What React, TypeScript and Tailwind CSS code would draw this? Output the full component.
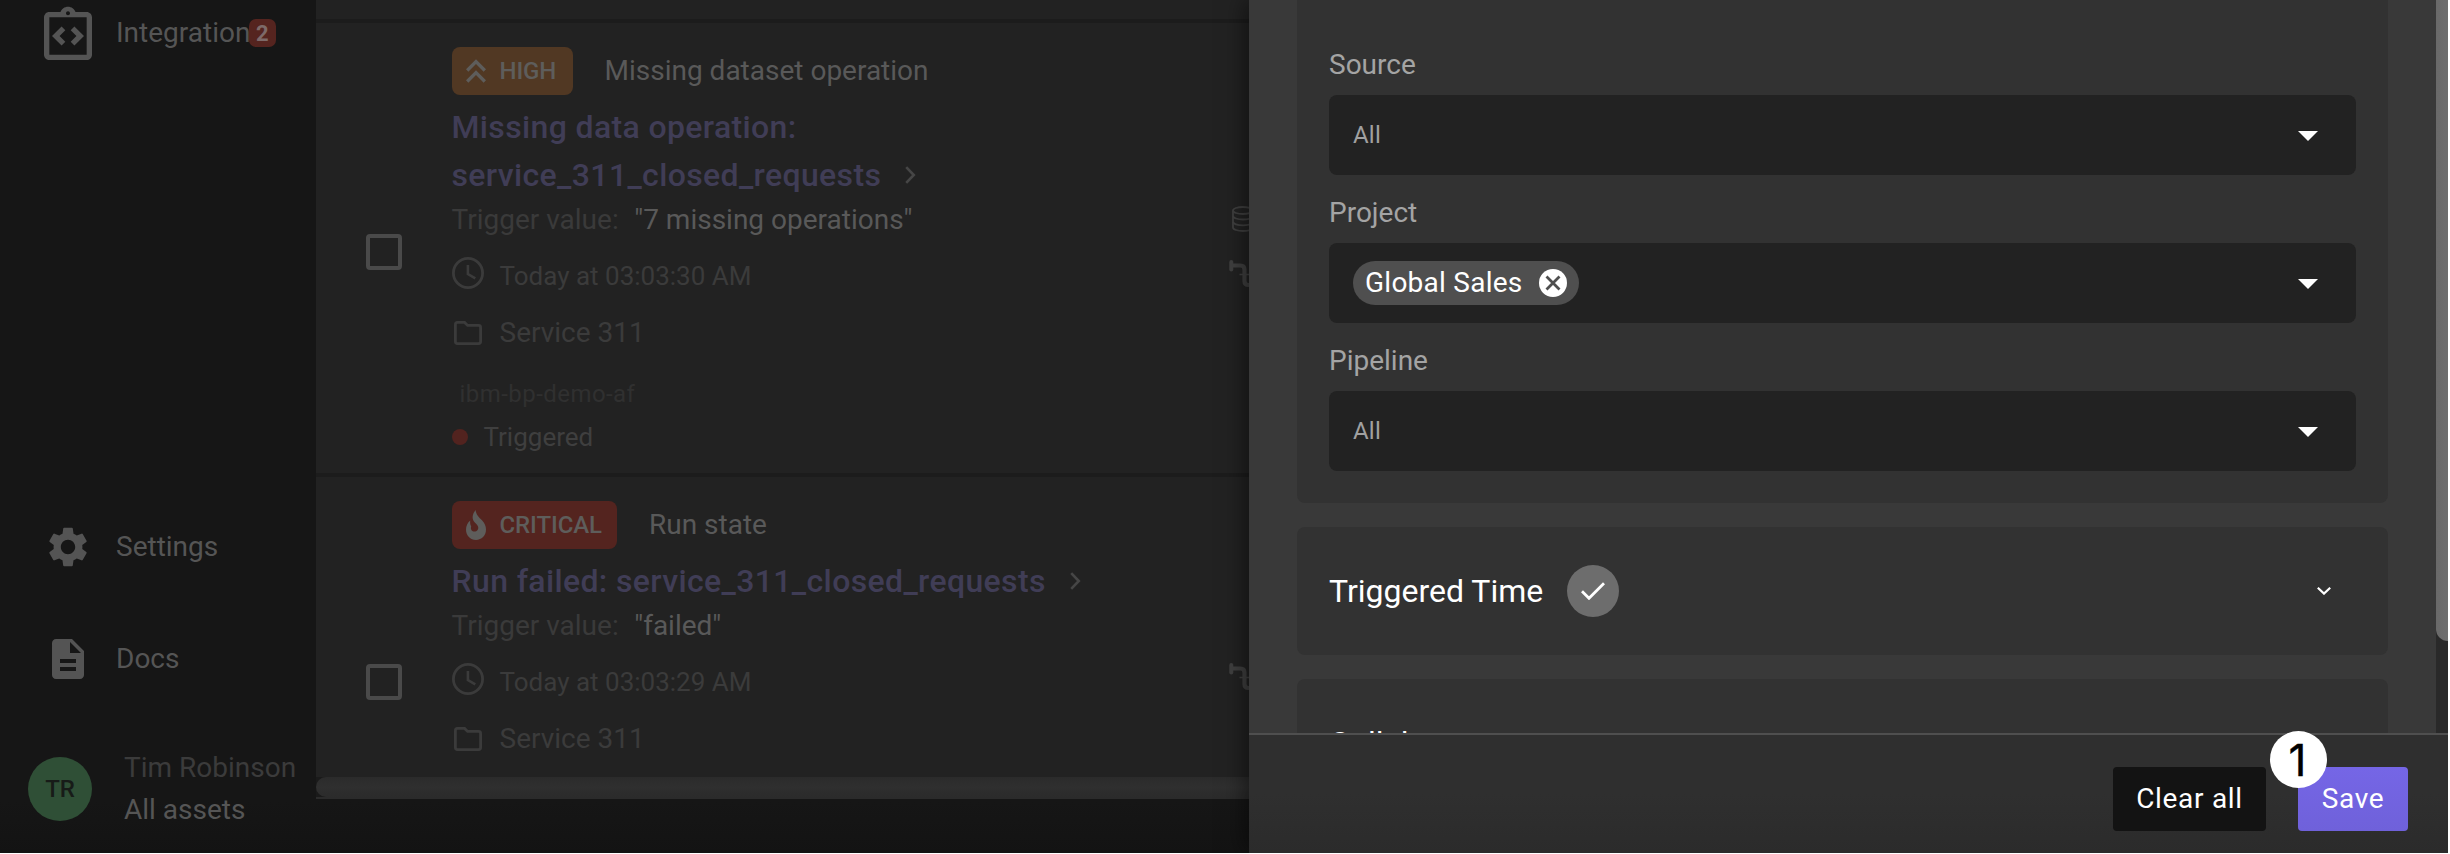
import React from "react";
import {
  MdOutlineIntegrationInstructions,
  MdSettings,
  MdDescription,
  MdKeyboardDoubleArrowUp,
} from "react-icons/md";

function ClockIcon() {
  return (
    <svg className="mb-[6px] size-8 shrink-0" viewBox="0 0 32 32" fill="none" stroke="currentColor" strokeWidth="2.8">
      <circle cx="16" cy="16" r="14.6" />
      <path d="M15.9 8v9l7.4 4.4" strokeWidth="2.6" />
    </svg>
  );
}

function FolderIcon() {
  return (
    <svg className="mx-0.5 h-6 w-7 shrink-0" viewBox="0 0 28 24" fill="none" stroke="currentColor" strokeWidth="2.8">
      <path d="M3.4 1.4h7.2l3 3h11q2 0 2 2v14.2q0 2-2 2H3.4q-2 0-2-2V3.4q0-2 2-2z" />
    </svg>
  );
}

function FlameIcon() {
  return (
    <svg className="h-[30px] w-5 shrink-0" viewBox="0 0 20 30" fill="currentColor">
      <path d="M9.6 0C9.9 4.4 13 7.200 16.200 10.600C18.600 13.200 20 16 20 19.600C20 25.600 15.600 30 10 30C4.400 30 0 25.700 0 19.600C0 15.800 1.600 12.600 4.200 10.400C4 13.200 4.300 15 5.200 16.200C4.200 19.400 6 21.600 8.400 21.600C11 21.600 12.600 19.600 12.200 17C11.800 14.600 9.200 13.200 7.800 11.200C5.700 8 6.600 3.600 9.600 0Z" />
    </svg>
  );
}

function DatabaseIcon() {
  return (
    <svg className="ml-[3px] h-[26px] w-6 shrink-0" viewBox="0 0 24 26" fill="none" stroke="currentColor" strokeWidth="1.8">
      <ellipse cx="11" cy="4.500" rx="10" ry="3.500" />
      <path d="M1 4.500V21.500c0 2 4.500 3.500 10 3.500S21 23.500 21 21.500V4.500" />
      <path d="M1 10c0 2 4.500 3.500 10 3.500S21 12 21 10M1 15.800c0 2 4.500 3.500 10 3.500S21 17.800 21 15.800" />
    </svg>
  );
}

function PipeIcon() {
  return (
    <svg className="h-7 w-8 shrink-0" viewBox="0 0 32 28" fill="none" stroke="currentColor">
      <path d="M2.300 2v7.500" strokeWidth="4" strokeLinecap="round" />
      <path d="M3 5.500h8.500q4 0 4 4V21q0 4 4 4H30" strokeWidth="4.200" />
      <path d="M10.500 14.500h10" strokeWidth="1.600" />
    </svg>
  );
}

function ChevronRight() {
  return (
    <svg className="h-[18px] w-[11px] shrink-0" viewBox="0 0 11 18" fill="none" stroke="currentColor" strokeWidth="2.6">
      <path d="M1.200 1.200L8.800 9L1.200 16.800" />
    </svg>
  );
}

function NavItem({ icon, label, badge }: { icon: React.ReactNode; label: string; badge?: string }) {
  return (
    <div className="flex h-16 items-center text-[28px] text-[#555]">
      <div className="flex w-[136px] shrink-0 justify-center text-[#545454]">{icon}</div>
      <span className="-ml-5">{label}</span>
      {badge && (
        <span className="-ml-[1.5px] flex h-7 w-[27px] items-center justify-center rounded-[7px] bg-[#55241f] text-[22px] font-bold text-[#7d6a69]">
          {badge}
        </span>
      )}
    </div>
  );
}

type Alert = {
  severity: "HIGH" | "CRITICAL";
  kind: string;
  title: string[];
  value: string;
  time: string;
  project: string;
  tag?: string;
  status?: string;
};

function AlertRow({ alert, checkTop, iconsTop }: { alert: Alert; checkTop: string; iconsTop: string }) {
  const high = alert.severity === "HIGH";
  return (
    <div className="flex shrink-0 border-t-4 border-[#1c1c1c]">
      <div className={`ml-[50px] w-[85.5px] shrink-0 ${checkTop}`}>
        <div className="size-9 rounded-[4px] border-4 border-[#4a4a4a]" />
      </div>
      <div className="flex w-[777.5px] shrink-0 flex-col pt-6">
        <div className="flex h-12 items-center text-[28px] text-[#595959]">
          <div
            className={`flex h-12 items-center rounded-lg text-[#5e5d5b] ${
              high ? "w-[121px] bg-[#513823]" : "w-[165.5px] bg-[#54241f]"
            }`}
          >
            <div className="flex w-12 justify-center">
              {high ? <MdKeyboardDoubleArrowUp className="size-10" /> : <FlameIcon />}
            </div>
            <span className="text-[24px] font-medium tracking-[-0.1px]">{alert.severity}</span>
          </div>
          <span className="ml-8">{alert.kind}</span>
        </div>
        <div className="mt-2 text-[32px] leading-[48px] font-medium tracking-[0.36px] text-[#403d56]">
          {alert.title.map((line, i) => (
            <div key={line} className="flex items-center whitespace-nowrap">
              {line}
              {i === alert.title.length - 1 && (
                <span className="ml-6 text-[#464646]">
                  <ChevronRight />
                </span>
              )}
            </div>
          ))}
        </div>
        <div className="flex h-[41px] items-center text-[28px] text-[#3a3a3a]">
          Trigger value:<span className="ml-[15.5px] text-[#595959]">{alert.value}</span>
        </div>
        <div className="flex h-[72px] items-center gap-4 text-[26px] text-[#3b3b3b]">
          <ClockIcon />
          {alert.time}
        </div>
        <div className="flex h-[42px] items-center gap-4 text-[28px] text-[#3b3b3b]">
          <FolderIcon />
          {alert.project}
        </div>
        {alert.tag && (
          <div className="mt-[22px] flex h-9 items-center pl-2 text-[24px] tracking-[0.45px] text-[#303030]">{alert.tag}</div>
        )}
        {alert.status && (
          <div className="mb-[11px] flex h-[50px] items-center text-[26px] text-[#3f3f3f]">
            <span className="mr-4 size-4 rounded-full bg-[#52231f]" />
            {alert.status}
          </div>
        )}
      </div>
      <div className={`flex flex-col gap-7 text-[#404040] ${iconsTop}`}>
        {high && <DatabaseIcon />}
        <PipeIcon />
      </div>
    </div>
  );
}

const alerts: Alert[] = [
  {
    severity: "HIGH",
    kind: "Missing dataset operation",
    title: ["Missing data operation:", "service_311_closed_requests"],
    value: '"7 missing operations"',
    time: "Today at 03:03:30 AM",
    project: "Service 311",
    tag: "ibm-bp-demo-af",
    status: "Triggered",
  },
  {
    severity: "CRITICAL",
    kind: "Run state",
    title: ["Run failed: service_311_closed_requests"],
    value: '"failed"',
    time: "Today at 03:03:29 AM",
    project: "Service 311",
  },
];

function FilterSelect({ label, children }: { label: string; children: React.ReactNode }) {
  return (
    <div className="flex flex-col">
      <div className="flex h-[68px] items-center pt-2 text-[28px] text-[#a4a4a4]">{label}</div>
      <div className="flex h-20 items-center justify-between rounded-lg bg-[#222] pr-[38px] pl-6">
        {children}
        <svg className="mt-[2px] h-[10px] w-5" viewBox="0 0 20 10" fill="#fff">
          <path d="M0 0h20L10 10z" />
        </svg>
      </div>
    </div>
  );
}

function Placeholder() {
  return <span className="text-[24px] tracking-[0.2px] text-[#a0a0a0]">All</span>;
}

export default function App() {
  return (
    <div className="h-[854px] w-[2450px] overflow-hidden bg-white font-['Roboto',sans-serif]">
      <div className="flex h-[853px] w-[2448px] overflow-hidden bg-[#161616]">
        <aside className="flex w-[316px] shrink-0 flex-col bg-linear-to-b from-[#161616] from-94% to-[#131313]">
          <div className="mt-[1px]">
            <NavItem icon={<MdOutlineIntegrationInstructions className="size-16 translate-y-[3px]" />} label="Integration" badge="2" />
          </div>
          <div className="mt-[450px] flex flex-col gap-12">
            <NavItem icon={<MdSettings className="size-12" />} label="Settings" />
            <NavItem icon={<MdDescription className="size-12" />} label="Docs" />
          </div>
          <div className="mt-14 flex items-center pl-7">
            <div className="flex size-16 items-center justify-center rounded-full bg-[#2f4f36] text-[24px] font-medium text-[#171b18]">
              TR
            </div>
            <div className="ml-8 text-[28px] leading-[42px] whitespace-nowrap">
              <div className="text-[#3b3b3b]">Tim Robinson</div>
              <div className="text-[#555]">All assets</div>
            </div>
          </div>
        </aside>

        <main className="flex w-[933px] shrink-0 flex-col overflow-hidden bg-linear-to-b from-[#161616] from-94% to-[#131313]">
          <div className="flex h-[777px] shrink-0 flex-col overflow-hidden bg-[#222] pt-[19px]">
            <AlertRow alert={alerts[0]} checkTop="pt-[211px]" iconsTop="pt-[183px]" />
            <AlertRow alert={alerts[1]} checkTop="pt-[187px]" iconsTop="pt-[186px]" />
          </div>
          <div className="h-[22px] shrink-0 border-b-2 border-[#2b2b2b] bg-[#1a1a1a]">
            <div className="h-5 w-[1200px] rounded-full bg-linear-to-b from-[#2b2b2b] via-[#2f2f2f] to-[#2b2b2b]" />
          </div>
        </main>

        <section className="relative flex w-[1199px] shrink-0 flex-col bg-[#393939] shadow-[-4px_0_22px_rgba(0,0,0,0.5)]">
          <div className="flex h-[733px] shrink-0 overflow-hidden">
            <div className="flex w-[1187px] flex-col gap-6 pr-12 pl-12">
              <div className="h-[503px] shrink-0 rounded-b-lg bg-[#323232] px-8 pt-[27px]">
                <FilterSelect label="Source">
                  <Placeholder />
                </FilterSelect>
                <FilterSelect label="Project">
                  <div className="flex h-11 items-center rounded-full bg-[#4f4f4f] px-3 text-[28px] tracking-[0.25px] text-white">
                    Global Sales
                    <svg className="ml-[16.500px] size-7" viewBox="0 0 28 28">
                      <circle cx="14" cy="14" r="14" fill="#fff" />
                      <path d="M7.500 7.500l13 13M20.500 7.500l-13 13" stroke="#4f4f4f" strokeWidth="2.800" />
                    </svg>
                  </div>
                </FilterSelect>
                <FilterSelect label="Pipeline">
                  <Placeholder />
                </FilterSelect>
              </div>
              <div className="flex h-32 shrink-0 items-center rounded-lg bg-[#323232] pr-[57px] pl-8 text-[32px] text-white">
                Triggered Time
                <div className="ml-6 flex size-[52px] items-center justify-center rounded-full bg-[#6d6d6d]">
                  <svg className="h-[18px] w-6" viewBox="0 0 24 18" fill="none" stroke="#fff" strokeWidth="2.800">
                    <path d="M1 9.300l7 7L23 1.200" />
                  </svg>
                </div>
                <svg className="ml-auto h-2 w-[14px]" viewBox="0 0 14 8" fill="none" stroke="#fff" strokeWidth="2.200">
                  <path d="M.8.800L7 6.600L13.200.800" />
                </svg>
              </div>
              <div className="flex h-32 shrink-0 items-center rounded-lg bg-[#323232] pl-8 text-[32px] text-white">
                Collaborators
              </div>
            </div>
            <div className="w-3 overflow-hidden bg-[#292929]">
              <div className="h-[641px] w-6 rounded-b-full bg-linear-to-r from-[#696969] to-[#737373]" />
            </div>
          </div>
          <footer className="flex h-[120px] items-start justify-end gap-8 border-t-2 border-[#4f4f4f] bg-linear-to-b from-[#2f2f2f] from-50% to-[#2b2b2b] pt-8 pr-10 text-[28px] tracking-[0.7px] text-white">
            <button className="h-16 w-[153px] rounded bg-[#131313]">Clear all</button>
            <div className="relative">
              <button className="h-16 w-[110px] rounded bg-linear-to-b from-[#7566e6] to-[#6f61da]">Save</button>
              <div className="absolute -top-9 -left-7 flex size-[57px] items-center justify-center rounded-full bg-white pr-0.5 font-['Inter',sans-serif] text-[44px] leading-none tracking-normal text-black [-webkit-text-stroke:0.4px_black]">
                1
              </div>
            </div>
          </footer>
        </section>
      </div>
    </div>
  );
}
